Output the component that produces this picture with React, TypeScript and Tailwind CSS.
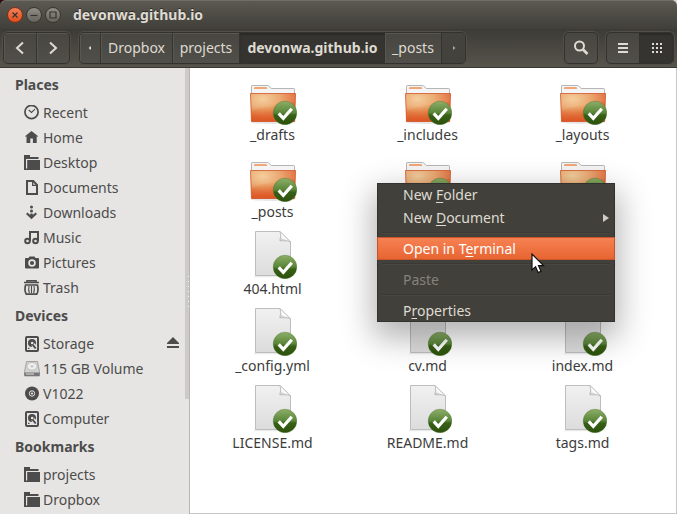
import type { ReactNode } from "react";

type IconName =
  | "clock" | "home" | "folder" | "document" | "download" | "music"
  | "camera" | "trash" | "disk" | "volume" | "disc";

const glyphs: Record<IconName, ReactNode> = {
  clock: (
    <g fill="none" stroke="currentColor">
      <circle cx="7.5" cy="7" r="6.6" strokeWidth="1.7" />
      <path d="M4.8 5 7.5 7.5 11 4.2" strokeWidth="1.1" />
    </g>
  ),
  home: <path fill="currentColor" d="M7.5 1 .7 6.500H2.500V13h3.800V8.500h2.600V13h3.800V6.500h1.800z" />,
  folder: (
    <g fill="currentColor">
      <path d="M0 0h6v2h8.500v2H2v11H0z" />
      <path d="M3.200 5H16v10H1V13.500h2.200z" />
    </g>
  ),
  document: (
    <g fill="none" stroke="currentColor" strokeWidth="2">
      <path d="M3 1h6.300L13 4.800V14H3z" />
      <path d="M8.700 1v4.400H13" strokeWidth="1.300" />
    </g>
  ),
  download: (
    <g fill="currentColor">
      <circle cx="7.500" cy="2" r="1.500" />
      <circle cx="7.500" cy="6" r="1.500" />
      <path d="m2 9 1.400-1.500 2.900 2.600V8.500h2.400v1.600l2.900-2.600L13 9l-5.500 5.200z" />
    </g>
  ),
  music: (
    <g fill="none" stroke="currentColor" strokeWidth="2">
      <path d="M6 11V2h8v9" />
      <circle cx="3.500" cy="11" r="2.300" />
      <circle cx="11.500" cy="11" r="2.300" />
    </g>
  ),
  camera: (
    <g>
      <path fill="currentColor" d="M1.500 3h3l1-1.500h5l1 1.500h3l.5.800v8.900l-.7.800H1.700L1 12.700V3.800z" />
      <circle cx="8" cy="8" r="2.900" fill="none" stroke="#e7e5e3" strokeWidth="1.700" />
    </g>
  ),
  trash: (
    <g fill="none" stroke="currentColor">
      <path d="M3 2V.8h9V2M0 2.500h15" strokeWidth="1.600" />
      <path d="M1.600 5C.5 9 .9 12 2.300 14.200h10.400C14.100 12 14.500 9 13.400 5z" strokeWidth="1.700" />
      <path d="M5 6q-.8 3.500.3 7M7.500 6v7M10 6q.8 3.500-.3 7" strokeWidth="1.100" />
    </g>
  ),
  disk: (
    <g>
      <rect x="2" y="1" width="12" height="14" rx="1" fill="none" stroke="currentColor" strokeWidth="2" />
      <circle cx="8" cy="7" r="4" fill="currentColor" />
      <circle cx="8.200" cy="7" r="1.300" fill="#e7e5e3" />
      <path stroke="#e7e5e3" strokeWidth="4" d="m9 8.500 3 4" />
      <path stroke="currentColor" strokeWidth="2" d="m8.500 8.500 3.200 4" />
      <path stroke="currentColor" strokeWidth="1.200" d="M4 12.300h1.500" />
    </g>
  ),
  volume: (
    <g>
      <path fill="#d2d2d1" stroke="#969696" strokeWidth=".8" d="M2.500.5h11l2 10.500v4H.5v-4z" />
      <ellipse cx="8" cy="5.400" rx="5" ry="3.800" fill="#efefef" stroke="#b1b1b1" strokeWidth=".7" />
      <ellipse cx="8" cy="5.400" rx="1.600" ry="1.100" fill="#c3c3c3" />
      <path fill="#777" d="M.5 11.500h15V15H.5z" />
      <path fill="#bdbdbd" d="M2 12.300h8v1.500H2z" />
    </g>
  ),
  disc: (
    <g>
      <circle cx="8" cy="7.500" r="7" fill="currentColor" />
      <circle cx="8" cy="7.500" r="2.700" fill="none" stroke="#e7e5e3" />
      <circle cx="8" cy="7.500" r="1.100" fill="#e7e5e3" />
    </g>
  ),
};

const sections: { title: string; items: { label: string; icon: IconName; eject?: boolean }[] }[] = [
  {
    title: "Places",
    items: [
      { label: "Recent", icon: "clock" },
      { label: "Home", icon: "home" },
      { label: "Desktop", icon: "folder" },
      { label: "Documents", icon: "document" },
      { label: "Downloads", icon: "download" },
      { label: "Music", icon: "music" },
      { label: "Pictures", icon: "camera" },
      { label: "Trash", icon: "trash" },
    ],
  },
  {
    title: "Devices",
    items: [
      { label: "Storage", icon: "disk", eject: true },
      { label: "115 GB Volume", icon: "volume" },
      { label: "V1022", icon: "disc" },
      { label: "Computer", icon: "disk" },
    ],
  },
  {
    title: "Bookmarks",
    items: [
      { label: "projects", icon: "folder" },
      { label: "Dropbox", icon: "folder" },
    ],
  },
];

const files: { name?: string; kind: "folder" | "page" }[] = [
  { name: "_drafts", kind: "folder" },
  { name: "_includes", kind: "folder" },
  { name: "_layouts", kind: "folder" },
  { name: "_posts", kind: "folder" },
  { kind: "folder" },
  { kind: "folder" },
  { name: "404.html", kind: "page" },
  { kind: "page" },
  { kind: "page" },
  { name: "_config.yml", kind: "page" },
  { name: "cv.md", kind: "page" },
  { name: "index.md", kind: "page" },
  { name: "LICENSE.md", kind: "page" },
  { name: "README.md", kind: "page" },
  { name: "tags.md", kind: "page" },
];

function Gradients() {
  return (
    <svg className="absolute size-0" aria-hidden="true">
      <defs>
        <radialGradient id="folderFill" cx=".27" cy=".2" r=".8">
          <stop offset="0" stopColor="#f3cb95" />
          <stop offset=".5" stopColor="#e9a064" />
          <stop offset="1" stopColor="#e0602f" />
        </radialGradient>
        <linearGradient id="folderShade" x1="0" y1="0" x2="0" y2="1">
          <stop offset=".45" stopColor="#dc5420" stopOpacity="0" />
          <stop offset="1" stopColor="#dc5420" stopOpacity=".8" />
        </linearGradient>
        <linearGradient id="badgeFill" x1="0" y1="0" x2="0" y2="1">
          <stop offset="0" stopColor="#8eae68" />
          <stop offset=".48" stopColor="#5a873a" />
          <stop offset=".6" stopColor="#376016" />
          <stop offset="1" stopColor="#2c500b" />
        </linearGradient>
        <linearGradient id="pageFill" x1="0" y1="0" x2="0" y2="1">
          <stop offset="0" stopColor="#f1f1f1" />
          <stop offset="1" stopColor="#dcdcdc" />
        </linearGradient>
        <linearGradient id="foldFill" x1="0" y1="1" x2=".6" y2=".3">
          <stop offset="0" stopColor="#b9b9b9" />
          <stop offset=".6" stopColor="#fdfdfd" />
        </linearGradient>
      </defs>
    </svg>
  );
}

function FileIcon({ folder }: { folder: boolean }) {
  return (
    <svg viewBox="0 0 48 48" className="size-12" aria-hidden="true">
      {folder ? (
        <g>
          <ellipse cx="24" cy="45.500" rx="22" ry="1.500" fill="#000" opacity=".1" />
          <path d="M2.500 20V9.200q0-.7.700-.7h15.600q.6 0 1 .5l2.400 2.500h22.600q.7 0 .7.700V20z" fill="#f4f4f4" stroke="#b5b5b5" />
          <path d="M5 11.300q0-1.300 1.300-1.300h10.500q1.200 0 1.200 1.300v.7H5z" fill="#efa678" />
          <path d="M1.500 16.500h45L45.700 44.500H2.500z" fill="url(#folderFill)" />
          <path d="M1.500 16.500h45L45.700 44.500H2.500z" fill="url(#folderShade)" />
          <path d="M2 17h44v8Q22 27 2.500 34z" fill="#fff" opacity=".08" />
          <path d="M1.500 16.500h45L45.700 44.500H2.500z" fill="none" stroke="#d0562a" strokeWidth=".8" />
        </g>
      ) : (
        <g>
          <path d="M5 45.500h36" stroke="#000" strokeOpacity=".08" strokeWidth="1.500" />
          <path d="M6.500.5h24.500l10.500 10.500V44.500h-35z" fill="url(#pageFill)" stroke="#bdbdbd" />
          <path d="M31 1v9.500h10z" fill="#aaa" opacity=".35" />
          <path d="M31 .5q1.800 5-.3 9 4-1.500 10.800 1.500z" fill="url(#foldFill)" stroke="#b2b2b2" strokeWidth=".7" />
        </g>
      )}
      <circle cx="36" cy="36" r="11.800" fill="url(#badgeFill)" stroke="#4d7330" strokeWidth=".4" />
      <path d="m29.700 36.300 4.600 5 8.500-9.500" fill="none" stroke="#fff" strokeWidth="3.200" />
    </svg>
  );
}

const group = "flex h-8 overflow-hidden rounded-[5px] border border-[#33322e] bg-linear-to-b from-[#474641] to-[#514f49] shadow-[0_0_0_1px_#504e47]";
const crumb = "flex items-center justify-center border-r border-[#34332f] shadow-[inset_1px_1px_0_#595750]";

function WindowButton({ label, close, children }: { label: string; close?: boolean; children: ReactNode }) {
  return (
    <button
      aria-label={label}
      className={`flex size-4 items-center justify-center rounded-full border ${
        close
          ? "border-[#7f3117] bg-linear-to-b from-[#f58057] to-[#df4c1b]"
          : "border-[#383731] bg-linear-to-b from-[#908e85] to-[#66645c]"
      }`}
    >
      <svg viewBox="0 0 14 14" className="size-3.5 shrink-0" fill="none" stroke="#34332f" strokeWidth="1.2">
        {children}
      </svg>
    </button>
  );
}

function TitleBar() {
  return (
    <header className="flex h-[29px] items-center gap-[3px] rounded-t-md bg-linear-to-b from-[#5c5a52] to-[#403f3a] pl-[7px] shadow-[inset_0_1px_0_#716e65]">
      <WindowButton label="Close" close><path d="m4.500 4.500 5 5m0-5-5 5" /></WindowButton>
      <WindowButton label="Minimize"><path d="M3.500 7.500h7" /></WindowButton>
      <WindowButton label="Maximize"><path d="M4 4h6v6H4z" /></WindowButton>
      <h1 className="ml-[9px] text-sm font-bold text-[#dfdbd2] [text-shadow:0_-1px_0_#2b2a27]">devonwa.github.io</h1>
    </header>
  );
}

function Toolbar() {
  return (
    <nav className="flex h-[39px] items-start border-b border-[#383731] bg-linear-to-b from-[#3c3b37] to-[#57544b] px-[3px] pt-[3px] text-sm text-[#dfdbd2]">
      <div className={group}>
        <button aria-label="Back" className={`${crumb} w-[33px]`}>
          <svg viewBox="0 0 16 16" className="size-4" fill="none" stroke="currentColor" strokeWidth="2"><path d="M11 2.500 5 8l6 5.500" /></svg>
        </button>
        <button aria-label="Forward" className="flex w-8 items-center justify-center shadow-[inset_1px_1px_0_#595750]">
          <svg viewBox="0 0 16 16" className="size-4" fill="none" stroke="currentColor" strokeWidth="2"><path d="m5 2.500 6 5.500-6 5.500" /></svg>
        </button>
      </div>
      <div className={`${group} ml-[9px]`}>
        <button aria-label="Scroll path left" className={`${crumb} w-[21px]`}>
          <svg viewBox="0 0 4 6" className="h-1.5 w-1" fill="currentColor"><path d="M3 1v4L.5 3z" /></svg>
        </button>
        <button className={`${crumb} w-[72px]`}>Dropbox</button>
        <button className={`${crumb} w-[67px]`}>projects</button>
        <button className="w-[145px] bg-[#353430] text-center font-bold shadow-[inset_0_2px_2px_#2c2b28]">devonwa.github.io</button>
        <button className={`${crumb} w-[57px]`}>_posts</button>
        <button aria-label="Scroll path right" className="flex w-[23px] items-center justify-center bg-[#43423d] text-[#aaa79f]">
          <svg viewBox="0 0 4 6" className="h-1.5 w-1" fill="currentColor"><path d="M1 1v4l2.500-2z" /></svg>
        </button>
      </div>
      <div className={`${group} ml-auto`}>
        <button aria-label="Search" className="flex w-8 items-center justify-center">
          <svg viewBox="0 0 16 16" className="size-4" fill="none" stroke="currentColor">
            <circle cx="6.500" cy="6" r="4.500" strokeWidth="2" />
            <path d="m10 9.500 4.500 4.500" strokeWidth="2.600" />
          </svg>
        </button>
      </div>
      <div className={`${group} ml-2`}>
        <button aria-label="List view" className="flex w-8 items-center justify-center">
          <svg viewBox="0 0 10 10" className="size-2.5" fill="currentColor"><path d="M0 0h10v2H0zM0 4h10v2H0zM0 8h10v2H0z" /></svg>
        </button>
        <button aria-label="Icon view" className="flex w-[34px] items-center justify-center bg-[#353430] pl-0.5 shadow-[inset_0_2px_2px_#2c2b28]">
          <svg viewBox="0 0 10 10" className="size-2.5" fill="currentColor">
            <path d="M0 0h2v2H0zM4 0h2v2H4zM8 0h2v2H8zM0 4h2v2H0zM4 4h2v2H4zM8 4h2v2H8zM0 8h2v2H0zM4 8h2v2H4zM8 8h2v2H8z" />
          </svg>
        </button>
      </div>
    </nav>
  );
}

function Sidebar() {
  return (
    <aside className="relative w-[190px] shrink-0 border-r border-[#b9b5b0] bg-[#e7e5e3] pt-px text-sm text-[#4c4c4c]">
      {sections.map((section) => (
        <section key={section.title}>
          <h2 className="flex h-[31px] items-center pl-[15px] font-bold">{section.title}</h2>
          <ul>
            {section.items.map((item) => (
              <li key={item.label} className="flex h-[25px] items-center pr-2.5 pl-6">
                <button className="flex flex-1 items-center gap-[3px] text-left">
                  <svg viewBox="0 0 16 16" className="size-4" aria-hidden="true">{glyphs[item.icon]}</svg>
                  {item.label}
                </button>
                {item.eject && (
                  <button aria-label={`Eject ${item.label}`}>
                    <svg viewBox="0 0 12 14" className="h-3.5 w-3" fill="currentColor"><path d="m6 0 6 6v1H0V6zM0 9h12v2H0z" /></svg>
                  </button>
                )}
              </li>
            ))}
          </ul>
        </section>
      ))}
      <div className="absolute top-0 right-0 h-[331px] w-1 bg-[#cecac7]" />
      <div className="absolute top-52 right-0 flex w-px flex-col gap-1">
        {[0, 1, 2, 3, 4, 5, 6].map((dot) => <i key={dot} className="h-px bg-[#f8f7f6]" />)}
      </div>
    </aside>
  );
}

function MenuItem({ children, state, arrow }: { children: ReactNode; state?: "active" | "disabled"; arrow?: boolean }) {
  const look =
    state === "active"
      ? "bg-linear-to-b from-[#f88354] to-[#e6632f] text-white shadow-[inset_0_0_0_1px_#c75529]"
      : state === "disabled"
        ? "text-[#84827b]"
        : "text-[#dfdbd2]";
  return (
    <button role="menuitem" disabled={state === "disabled"} className={`flex h-[23px] w-full items-center justify-between pr-1.5 pl-[26px] ${look}`}>
      <span>{children}</span>
      {arrow && <svg viewBox="0 0 6 8" className="h-2 w-1.5" fill="#cfccc4"><path d="M0 0v8l6-4z" /></svg>}
    </button>
  );
}

function Divider() {
  return (
    <div role="separator" className="flex h-2 items-center px-[5px]">
      <div className="h-0.5 w-full border-t border-[#3a3934] bg-[#484741]" />
    </div>
  );
}

function ContextMenu() {
  return (
    <div role="menu" className="absolute top-[183px] left-[377px] w-[238px] bg-[#41403a] text-sm shadow-[inset_0_0_0_1px_#33322e,0_12px_30px_4px_rgba(0,0,0,0.3)] [&_u]:underline-offset-2">
      <MenuItem>New <u>F</u>older</MenuItem>
      <MenuItem arrow>New <u>D</u>ocument</MenuItem>
      <Divider />
      <MenuItem state="active">Open in T<u>e</u>rminal</MenuItem>
      <Divider />
      <MenuItem state="disabled">Paste</MenuItem>
      <Divider />
      <MenuItem>P<u>r</u>operties</MenuItem>
    </div>
  );
}

export default function App() {
  return (
    <div className="bg-linear-to-r from-[#2c0f0c] to-[#d8d8d8] font-['Noto_Sans','Open_Sans',sans-serif]">
      <div className="relative flex min-h-screen flex-col overflow-hidden">
        <Gradients />
        <TitleBar />
        <Toolbar />
        <div className="flex flex-1">
          <Sidebar />
          <main className="flex-1 border-r border-b border-[#c9c7c4] bg-white pt-[9px] pl-[5px]">
            <ul className="grid grid-cols-[repeat(auto-fill,155px)] gap-y-[9px]">
              {files.map((file, index) => (
                <li key={index} className="flex flex-col items-center text-sm leading-5 text-[#3c3c3c]">
                  <FileIcon folder={file.kind === "folder"} />
                  {file.name}
                </li>
              ))}
            </ul>
          </main>
        </div>
        <ContextMenu />
        <svg viewBox="0 0 14 22" className="absolute top-[253px] left-[531px] h-[22px] w-3.5" aria-hidden="true">
          <path d="M1 1v16l3.600-3.300L7 19.500l3-1.200-2.500-5.600h5z" fill="#fff" stroke="#111" strokeWidth="1.2" />
        </svg>
      </div>
    </div>
  );
}
